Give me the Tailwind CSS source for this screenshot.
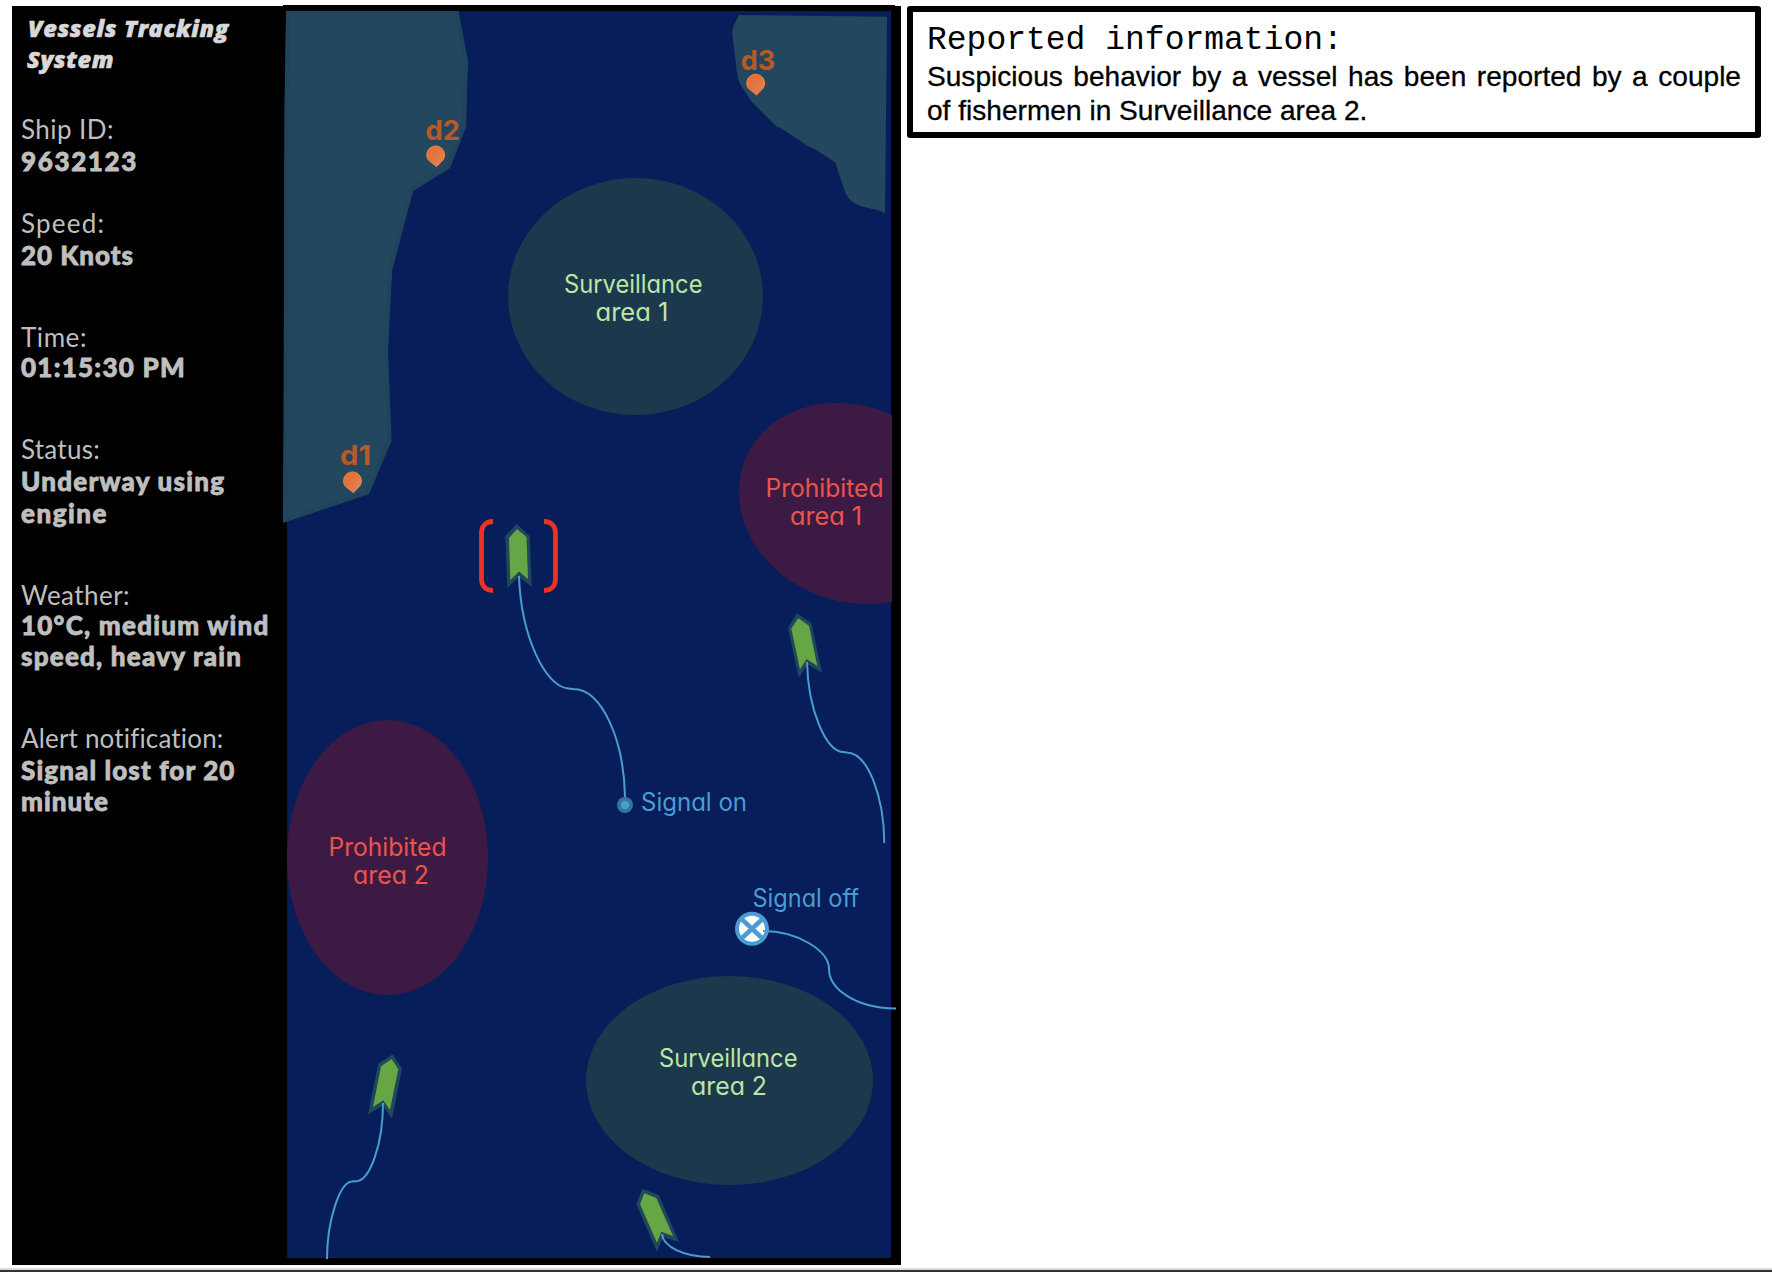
<!DOCTYPE html>
<html lang="en">
<head>
<meta charset="utf-8">
<title>Vessels Tracking System</title>
<script src="https://cdn.jsdelivr.net/npm/@tailwindcss/browser@4"></script>
</head>
<body class="bg-white">
<div class="flex h-[1272px] w-[1772px] flex-col justify-between overflow-hidden">
  <main class="flex items-start pl-3 pt-[5px]">
    <!-- Vessel details -->
    <aside class="mt-px flex h-[1259px] w-[271px] shrink-0 flex-col overflow-hidden whitespace-nowrap bg-black pl-[9px] text-[26px] text-[#bfbfbf] font-[Lato,sans-serif]">
      <h1 class="pl-[7px] pt-[7px] font-['Open_Sans',sans-serif] text-[23.5px] font-extrabold italic leading-[30.5px] text-[#d9d9d9] [-webkit-text-stroke:0.6px]">
        <span class="block tracking-[0.65px]">Vessels Tracking</span>
        <span class="-ml-px block tracking-[0.6px]">System</span>
      </h1>
      <dl class="mt-[39px] flex flex-col leading-8">
        <div class="mb-[30px]">
          <dt class="tracking-[0.45px]">Ship ID:</dt>
          <dd class="font-black tracking-[1.63px] [-webkit-text-stroke:0.8px]">9632123</dd>
        </div>
        <div class="mb-[51px]">
          <dt class="tracking-[1.2px]">Speed:</dt>
          <dd class="font-black tracking-[0.97px] [-webkit-text-stroke:0.8px]">20 Knots</dd>
        </div>
        <div class="mb-[50px]">
          <dt class="leading-[30px] tracking-[0.57px]">Time:</dt>
          <dd class="font-black leading-[31px] tracking-[1.25px] [-webkit-text-stroke:0.8px]">01:15:30 PM</dd>
        </div>
        <div class="mb-[51px]">
          <dt class="tracking-[0.26px]">Status:</dt>
          <dd class="font-black [-webkit-text-stroke:0.8px]"><span class="block tracking-[1.24px]">Underway using</span><span class="block tracking-[1.51px]">engine</span></dd>
        </div>
        <div class="mb-[50px]">
          <dt class="leading-[30px] tracking-[0.44px]">Weather:</dt>
          <dd class="font-black [-webkit-text-stroke:0.8px]"><span class="block leading-[30px] tracking-[1.23px]">10°C, medium wind</span><span class="block tracking-[1.21px]">speed, heavy rain</span></dd>
        </div>
        <div>
          <dt class="tracking-[0.17px]">Alert notification:</dt>
          <dd class="font-black [-webkit-text-stroke:0.8px]"><span class="block tracking-[1.11px]">Signal lost for 20</span><span class="block leading-[30px] tracking-[1.03px]">minute</span></dd>
        </div>
      </dl>
    </aside>

    <!-- Sea map: x 283-901, y 5-1265 -->
    <svg class="h-[1260px] w-[618px] shrink-0 bg-black font-[Inter,sans-serif] [font-feature-settings:'cv11']" viewBox="283 5 618 1260">
      <defs>
        <linearGradient id="pin" x1="0" y1="0" x2="1" y2="1">
          <stop offset="0.4" stop-color="#e4733a"/>
          <stop offset="1" stop-color="#d98a64"/>
        </linearGradient>
        <clipPath id="coast"><path d="M286 11 458.5 11 468 61 466 127 450 168 413 191 392 271 388 352 391.5 441 369 494 283 523 283.5 430 284.5 106Z"/></clipPath>
        <g id="dock">
          <path d="M-7.200 5.300A9 9 0 1 1 7.600 5.300L1 12Z" fill="url(#pin)" stroke="#ed8040" stroke-width="1"/>
        </g>
      </defs>
      <rect x="895" y="5" width="6" height="1" fill="#fff"/>
      <rect x="287" y="11" width="604" height="1247" fill="#081e5a"/>

      <!-- Coasts -->
      <g clip-path="url(#coast)">
        <path d="M286 11 458.5 11 468 61 466 127 450 168 413 191 392 271 388 352 391.5 441 369 494 283 523 283.5 430 284.5 106Z" fill="#23475f" stroke="#20445c" stroke-width="8"/>
      </g>
      <path d="M739 15 887 16.7 885 213.3C880 210 872 209 862 206.500Q851 203 846.500 195Q844 190 835.500 162.500L815 149Q808 147 805 144L781.500 128.500 776.500 126.500 751.500 101.500 740 84Q737 77 736 64L732.300 34Q732 29 734 25Z" fill="#23475f"/>

      <!-- Zones -->
      <ellipse cx="635.500" cy="296.500" rx="127.500" ry="118.500" fill="#1c384c"/>
      <ellipse cx="729.500" cy="1080.500" rx="143.500" ry="104.500" fill="#1c384c"/>
      <path d="M892 415C875 407 856 403 836 403C782 403 739 441 739 491C739 552 797 604 868 604Q880 604 892 602Z" fill="#3d1a43"/>
      <ellipse cx="387.500" cy="857.500" rx="100.500" ry="137.500" fill="#3d1a43"/>

      <!-- Ships -->
      <g fill="#20485c">
        <path d="M516.700 524 529.700 536 531.700 587 519 576.700 507.300 588 505.300 536Z"/>
        <path d="M797 613.300 811.300 623 822 672.700 807.700 664.300 798.700 677.700 788 628Z"/>
        <path d="M392.700 1054.300 402 1068.700 392 1118.700 382.700 1105.700 368 1114.300 378.300 1063.700Z"/>
        <path d="M642.300 1188.700 658.700 1195 679 1242 663 1237 657 1251.700 636.300 1204.300Z"/>
      </g>
      <g fill="#66a644">
        <path d="M517 529 526.500 537 528 579 519 571.500 510.300 580 509 538Z"/>
        <path d="M798.300 618.300 809 625.700 817.300 666 806.700 659 800 669.300 791.300 628.700Z"/>
        <path d="M391.700 1059 398.300 1069.300 390 1110 383.300 1100.300 373 1107 381 1066.300Z"/>
        <path d="M644.300 1193.300 656.300 1198 673 1236 661.300 1231.700 657 1242.700 640 1204.300Z"/>
      </g>

      <!-- Signal off marker -->
      <circle cx="752" cy="928.700" r="15" fill="#fff" stroke="#4a9cd3" stroke-width="4"/>
      <path d="M742 919.500 762 938M762 919.500 742 938" stroke="#4a9cd3" stroke-width="4.500"/>

      <!-- Tracks -->
      <g fill="none" stroke="#4a9cd3" stroke-width="2">
        <path d="M519 576C521 636 545 686 568 688.500L573 689C602 689 624 740 625 797"/>
        <path d="M807 662C808 710 826 751 843 752L847 752.500C868 753 884 797 884.300 843"/>
        <path d="M383 1103C383 1145 370 1178 358 1181L352 1181.500C340 1182 327 1220 327 1259"/>
        <path d="M662 1234C663 1247 685 1257 710 1257"/>
        <path d="M763 931C798 931 829 951 829 969C829 990 858 1008.500 896 1008.500"/>
      </g>
      <circle cx="625" cy="805" r="8" fill="#34759f"/>
      <circle cx="625" cy="805" r="4.200" fill="#4a9cd3"/>

      <!-- Selected vessel -->
      <path d="M493 521.500C485 521.500 481.500 527 481.500 533V579C481.500 585 485 590.500 493 590.500M544 521.500C552 521.500 555.500 527 555.500 533V579C555.500 585 552 590.500 544 590.500" fill="none" stroke="#ec3323" stroke-width="4.800"/>

      <!-- Docks -->
      <use href="#dock" x="352.300" y="480.700"/>
      <use href="#dock" x="435.500" y="154.700"/>
      <use href="#dock" x="755.500" y="83"/>
      <g class="text-[27.5px] font-bold" fill="#b85a26">
        <text x="340" y="465" textLength="31" lengthAdjust="spacingAndGlyphs">d1</text>
        <text x="425.500" y="139.500" textLength="34.500" lengthAdjust="spacingAndGlyphs">d2</text>
        <text x="740.700" y="70" textLength="34.500" lengthAdjust="spacingAndGlyphs">d3</text>
      </g>

      <g class="text-[25px]">
        <g fill="#bbe6a4">
          <text x="564" y="293" textLength="138.500" lengthAdjust="spacingAndGlyphs">Surveillance</text>
          <text x="595.500" y="321" textLength="73" lengthAdjust="spacingAndGlyphs">area 1</text>
          <text x="659" y="1067" textLength="138.500" lengthAdjust="spacingAndGlyphs">Surveillance</text>
          <text x="691" y="1095" textLength="76" lengthAdjust="spacingAndGlyphs">area 2</text>
        </g>
        <g fill="#ea544d">
          <text x="765.500" y="497" textLength="118" lengthAdjust="spacingAndGlyphs">Prohibited</text>
          <text x="790" y="525" textLength="72" lengthAdjust="spacingAndGlyphs">area 1</text>
          <text x="328.500" y="856" textLength="118" lengthAdjust="spacingAndGlyphs">Prohibited</text>
          <text x="353" y="884" textLength="76" lengthAdjust="spacingAndGlyphs">area 2</text>
        </g>
        <g fill="#4a9cd3">
          <text x="641" y="811" textLength="106" lengthAdjust="spacingAndGlyphs">Signal on</text>
          <text x="752.500" y="907" textLength="106.500" lengthAdjust="spacingAndGlyphs">Signal off</text>
        </g>
      </g>
    </svg>

    <!-- Report -->
    <section class="ml-[6px] mt-px h-[132px] w-[854px] shrink-0 rounded-[3px] border-[6px] border-black px-[14px] pt-[11px] text-black">
      <h2 class="font-['Liberation_Mono',monospace] text-[33px] leading-9">Reported information:</h2>
      <p class="mt-px text-justify font-['Liberation_Sans',sans-serif] text-[28.1px] leading-[33.6px] [-webkit-text-stroke:0.3px]">Suspicious behavior by a vessel has been reported by a couple of fishermen in Surveillance area 2.</p>
    </section>
  </main>
  <footer class="h-1 border-t-2 border-[#d9d9d9] bg-[#333]"></footer>
</div>
</body>
</html>
